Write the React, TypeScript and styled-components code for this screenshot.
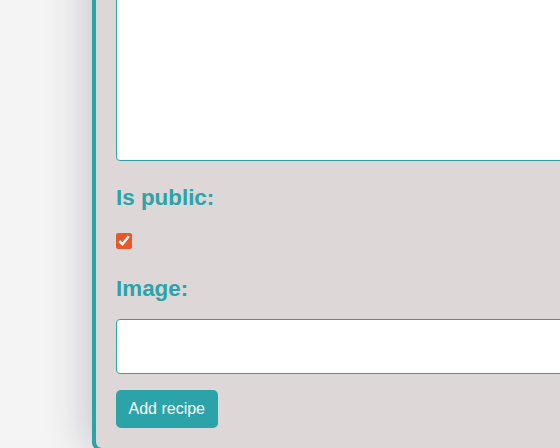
import styled, { createGlobalStyle } from "styled-components";

const GlobalStyle = createGlobalStyle`
  html, body {
    margin: 0;
    padding: 0;
    background: #f4f4f4;
    font-family: "Liberation Sans", Arial, sans-serif;
  }
`;

const Page = styled.div`
  height: 448px;
  overflow: hidden;
  display: flex;
  flex-direction: column;
  justify-content: flex-end;
`;

const Card = styled.form`
  margin-left: 92px;
  margin-bottom: -4px;
  width: 620px;
  flex-shrink: 0;
  box-sizing: border-box;
  background: #ddd7d7;
  border-left: 4px solid #2ba3a8;
  border-bottom: 4px solid #2ba3a8;
  border-bottom-left-radius: 10px;
  box-shadow: -6px 0 40px rgba(40, 40, 70, 0.22);
  padding: 0 0 20px 20px;
  display: flex;
  flex-direction: column;
`;

const TextArea = styled.textarea`
  display: block;
  box-sizing: border-box;
  width: 100%;
  height: 400px;
  margin: 0;
  background: #fff;
  border: 1px solid #2ba3a8;
  border-radius: 4px;
  resize: none;
  outline: none;
`;

const Label = styled.label<{ $top: number }>`
  display: block;
  margin-top: ${(p) => p.$top}px;
  color: #2ba3a8;
  font-size: 22.4px;
  font-weight: 700;
  line-height: 26px;
`;

const Check = styled.input`
  display: block;
  width: 16px;
  height: 16px;
  margin: 22px 0 0 0;
  accent-color: #e9582a;
`;

const TextInput = styled.input`
  display: block;
  box-sizing: border-box;
  width: 100%;
  height: 55px;
  margin-top: 17px;
  background: #fff;
  border: 1px solid #2ba3a8;
  border-radius: 4px;
  outline: none;
`;

const Button = styled.button`
  align-self: flex-start;
  margin-top: 16px;
  height: 38px;
  padding: 0 12.5px;
  background: #2ba3a8;
  color: #fff;
  border: none;
  border-radius: 5px;
  font-family: "Liberation Sans", Arial, sans-serif;
  font-size: 16px;
`;

const App: React.FC = () => {
  return (
    <>
      <GlobalStyle />
      <Page>
        <Card onSubmit={(e) => e.preventDefault()}>
          <TextArea />
          <Label $top={24}>Is public:</Label>
          <Check type="checkbox" defaultChecked />
          <Label $top={27}>Image:</Label>
          <TextInput type="text" />
          <Button type="submit">Add recipe</Button>
        </Card>
      </Page>
    </>
  );
};

export default App;
